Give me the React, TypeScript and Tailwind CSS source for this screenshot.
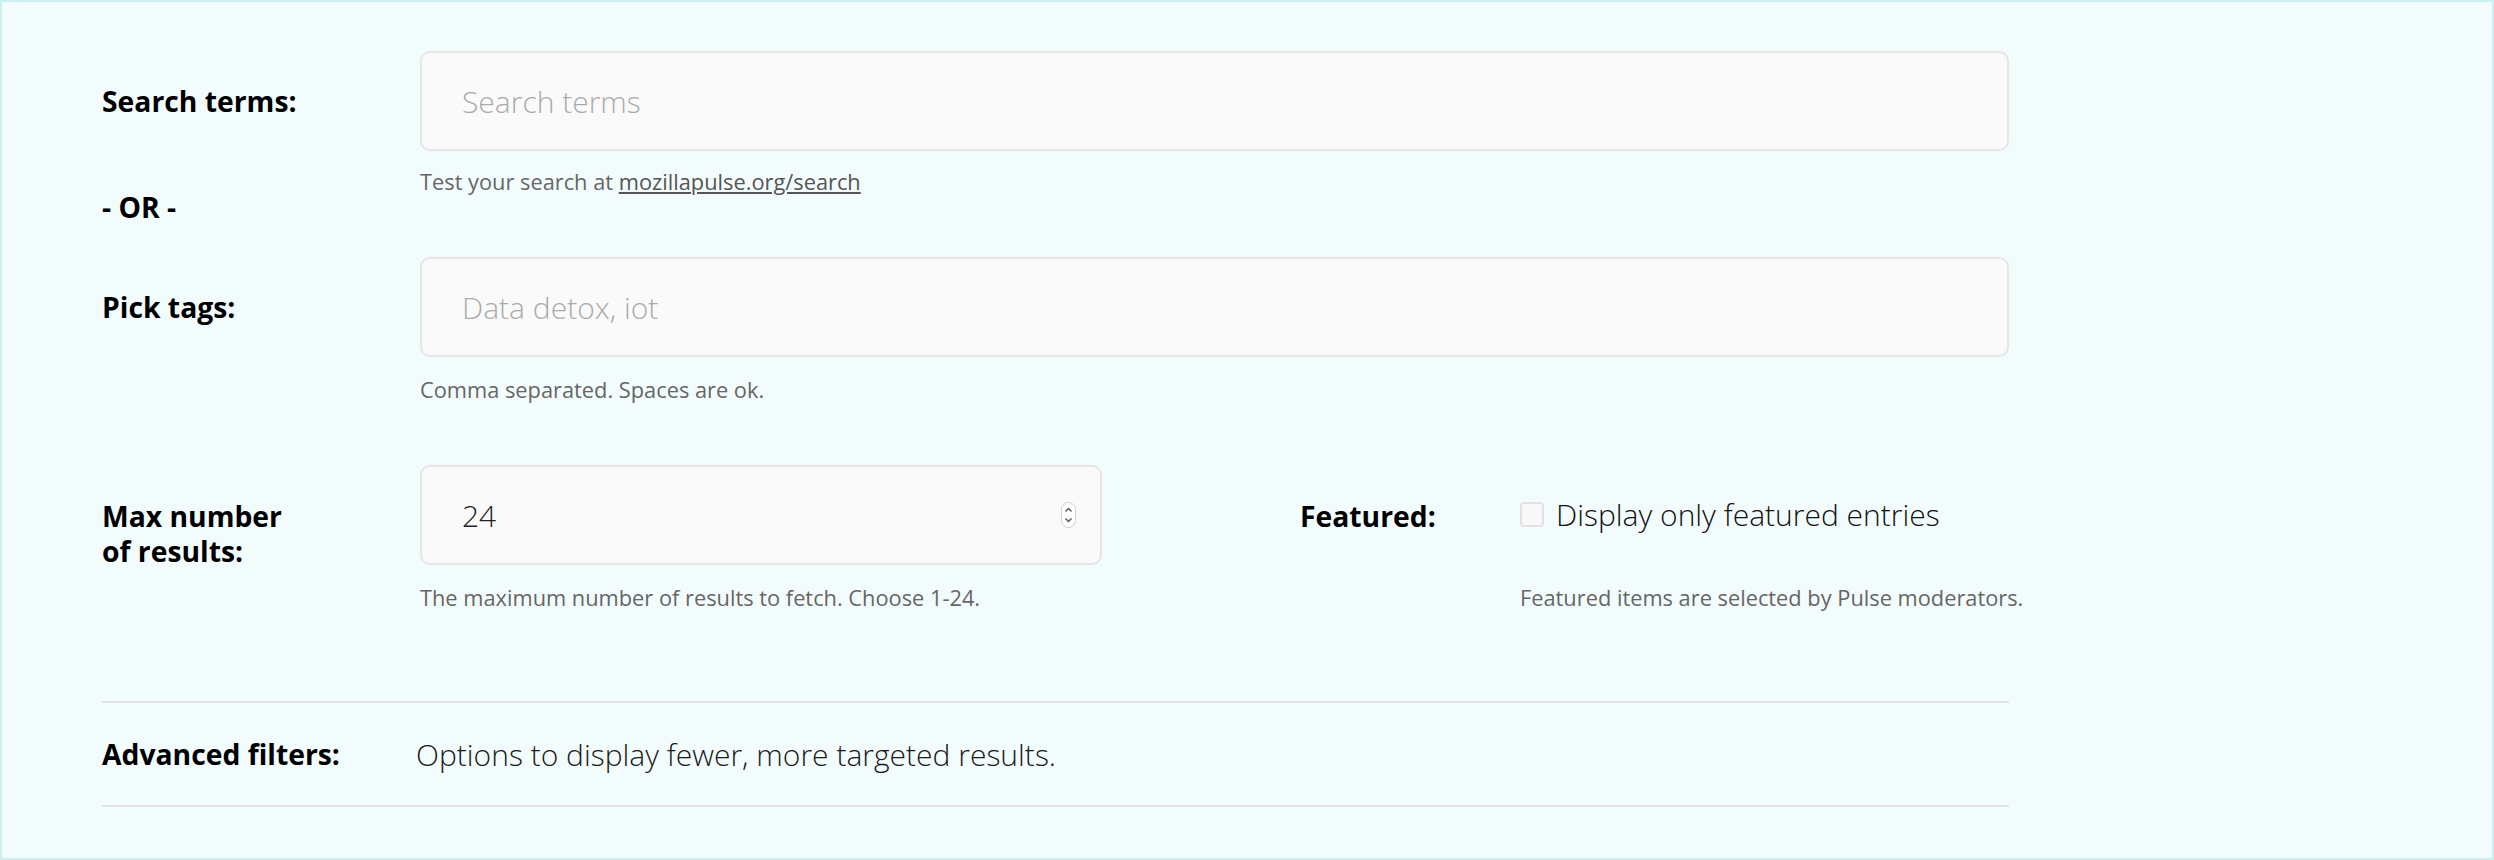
import React from "react";

const label = "text-[28.3px] leading-[35px] font-bold text-black";
const help = "text-[21.8px] leading-[33px] font-normal text-[#666]";
const field =
  "h-[100px] rounded-[10px] border-2 border-[#e6e6e6] bg-[#fafafa] px-[40px] text-[30px] font-light text-[#222] placeholder:text-[#ababab] outline-none";

const SpinButton: React.FC = () => (
  <span className="absolute right-[26px] top-[37px] flex h-[26px] w-[15px] flex-col items-center justify-center rounded-full border border-[#cfcfcf] bg-white">
    <svg width="9" height="20" viewBox="0 0 9 20" fill="none" stroke="#555" strokeWidth="1.4">
      <path d="M1.5 6.5 4.5 3.5 7.5 6.5" />
      <path d="M1.5 13.5 4.5 16.5 7.5 13.5" />
    </svg>
  </span>
);

const App: React.FC = () => {
  return (
    <div
      className="box-border h-[860px] w-full border-2 border-[#c8f0f1] bg-[#f3fcfc] pl-[100px] pt-[49px]"
      style={{ fontFamily: '"Open Sans", "Noto Sans", sans-serif' }}
    >
      <div className="flex w-[1907px] flex-col">
        {/* search terms */}
        <div className="flex items-center">
          <label className={`w-[318px] shrink-0 ${label}`}>Search terms:</label>
          <input className={`w-[1589px] ${field}`} placeholder="Search terms" />
        </div>
        <div className="mt-[14px] flex items-start">
          <div className={`mt-[25px] w-[318px] shrink-0 ${label}`}>- OR -</div>
          <p className={help}>
            Test your search at{" "}
            <a className="text-[#555] underline" href="#">
              mozillapulse.org/search
            </a>
          </p>
        </div>

        {/* tags */}
        <div className="mt-[32px] flex items-center">
          <label className={`w-[318px] shrink-0 ${label}`}>Pick tags:</label>
          <input className={`w-[1589px] ${field}`} placeholder="Data detox, iot" />
        </div>
        <div className="mt-[16px] flex">
          <div className="w-[318px] shrink-0" />
          <p className={help}>Comma separated. Spaces are ok.</p>
        </div>

        {/* max results + featured */}
        <div className="mt-[59px] flex items-start">
          <label className={`mt-[34px] w-[318px] shrink-0 ${label}`}>
            Max number
            <br />
            of results:
          </label>
          <div className="relative w-[682px] shrink-0">
            <input className={`w-full ${field}`} defaultValue="24" />
            <SpinButton />
          </div>
          <div className={`ml-[198px] mt-[34px] w-[220px] shrink-0 ${label}`}>Featured:</div>
          <label className="mt-[37px] flex items-start gap-[12px] text-[30px] font-light leading-[35px] text-[#111]">
            <span className="block h-[25px] w-[24px] shrink-0 rounded-[4px] border-2 border-[#e2e2e2] bg-[#f8f8f8]" />
            <span className="-mt-[5px]">Display only featured entries</span>
          </label>
        </div>
        <div className="mt-[12px] flex">
          <div className="w-[318px] shrink-0" />
          <p className={`w-[1100px] shrink-0 ${help}`}>
            The maximum number of results to fetch. Choose 1-24.
          </p>
          <p className={`whitespace-nowrap ${help}`}>Featured items are selected by Pulse moderators.</p>
        </div>

        {/* advanced */}
        <div className="mt-[87px] flex h-[106px] items-center border-y-2 border-[#e3e3e3]">
          <div className={`w-[314px] shrink-0 ${label}`}>Advanced filters:</div>
          <div className="text-[30px] font-light leading-[35px] text-[#1a1a1a]">
            Options to display fewer, more targeted results.
          </div>
        </div>
      </div>
    </div>
  );
};

export default App;
